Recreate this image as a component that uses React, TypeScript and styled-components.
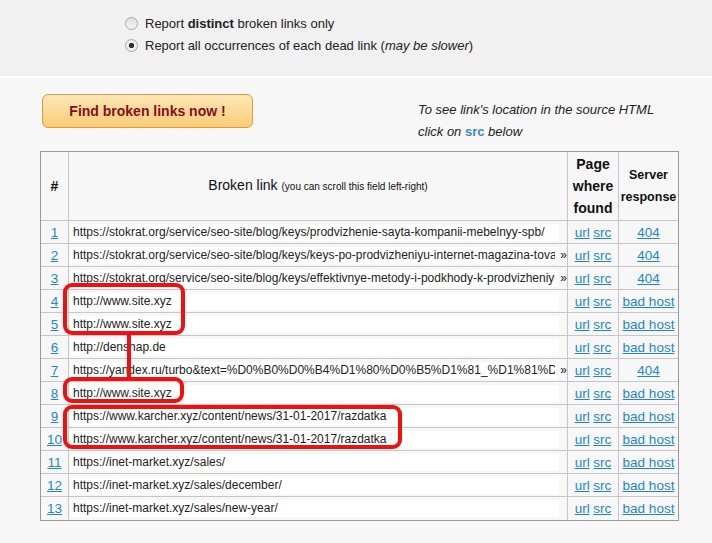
import React from "react";
import styled, { createGlobalStyle } from "styled-components";

const Global = createGlobalStyle`
  *, *::before, *::after { box-sizing: border-box; }
  html, body { margin: 0; padding: 0; background: #f7f7f7; }
  body { font-family: "Liberation Sans", Arial, sans-serif; color: #222; width: 712px; height: 543px; overflow: hidden; }
`;

const Page = styled.div`
  width: 712px;
  min-height: 543px;
  background: #f7f7f7;
`;

const TopPanel = styled.div`
  height: 78px;
  background: #f0f1f0;
  border-bottom: 2px solid #ffffff;
  padding: 12px 0 0 125px;
`;

const OptionRow = styled.label`
  display: flex;
  align-items: center;
  height: 22.5px;
  gap: 7px;
  font-size: 13px;
  color: #222;
`;

const Radio = styled.span<{ $checked?: boolean }>`
  width: 13px;
  height: 13px;
  border-radius: 50%;
  border: 1px solid #a9a9a9;
  background: ${(p) =>
    p.$checked
      ? "radial-gradient(circle, #333 0 2.5px, #f4f4f4 3px, #e2e2e2 100%)"
      : "linear-gradient(#dedede, #f6f6f6)"};
  flex: none;
`;

const Main = styled.div`
  padding: 16px 0 0 40px;
`;

const ActionRow = styled.div`
  display: flex;
  align-items: flex-start;
`;

const FindButton = styled.button`
  margin-left: 2px;
  width: 211px;
  height: 34px;
  border: 1px solid #e39a36;
  border-radius: 6px;
  background: linear-gradient(#fde7b6, #fbcd77);
  color: #8a0b22;
  font-family: "Liberation Sans", Arial, sans-serif;
  font-weight: bold;
  font-size: 14px;
  cursor: pointer;
`;

const Note = styled.div`
  margin: 5px 0 0 165px;
  font-style: italic;
  font-size: 13px;
  line-height: 22px;
  color: #222;
`;

const NoteLink = styled.b`
  font-style: normal;
  color: #4284bf;
`;

const TableWrap = styled.div`
  position: relative;
  margin-top: 8px;
  width: 639px;
`;

const Table = styled.table`
  table-layout: fixed;
  width: 639px;
  border-collapse: separate;
  border-spacing: 0;
  border: 1px solid #9a9a9a;
  background: #f7f7f7;
`;

const Th = styled.th<{ $size?: number; $bold?: boolean }>`
  height: 69px;
  padding: 0;
  border-right: 1px solid #c6c6c6;
  border-bottom: 1px solid #c6c6c6;
  font-size: ${(p) => p.$size ?? 13}px;
  font-weight: ${(p) => (p.$bold === false ? "normal" : "bold")};
  line-height: 22px;
  text-align: center;
  vertical-align: middle;
  color: #111;
  &:last-child { border-right: none; }
`;

const Small = styled.span`
  font-size: 10px;
  font-weight: normal;
`;

const Tr = styled.tr`
  &:last-child td { border-bottom: none; }
`;

const Td = styled.td<{ $align?: string }>`
  height: 23px;
  padding: 0;
  border-right: 1px solid #c6c6c6;
  border-bottom: 1px solid #c6c6c6;
  text-align: ${(p) => p.$align ?? "center"};
  vertical-align: middle;
  font-size: 13px;
  white-space: nowrap;
  &:last-child { border-right: none; }
`;

const A = styled.a`
  color: #1f86c8;
  text-decoration: underline;
  font-size: 13.5px;
`;

const LinkCell = styled.div`
  display: flex;
  align-items: center;
  padding-left: 1px;
`;

const Field = styled.div`
  width: 489px;
  height: 17px;
  background: #ffffff;
  padding: 0 3px 0 3px;
  font-size: 12px;
  line-height: 17px;
  overflow: hidden;
  white-space: nowrap;
  color: #222;
`;

const FieldText = styled.span`
  display: block;
  overflow: hidden;
  width: 100%;
`;

const More = styled.span`
  margin-left: 2px;
  font-size: 12px;
  color: #222;
`;

const Overlay = styled.svg`
  position: absolute;
  left: 0;
  top: 0;
  pointer-events: none;
`;

type Row = { url: string; more?: boolean; status: string };

const rows: Row[] = [
  { url: "https://stokrat.org/service/seo-site/blog/keys/prodvizhenie-sayta-kompanii-mebelnyy-spb/", status: "404" },
  { url: "https://stokrat.org/service/seo-site/blog/keys/keys-po-prodvizheniyu-internet-magazina-tovarov/", more: true, status: "404" },
  { url: "https://stokrat.org/service/seo-site/blog/keys/effektivnye-metody-i-podkhody-k-prodvizheniyu-saytov/", more: true, status: "404" },
  { url: "http://www.site.xyz", status: "bad host" },
  { url: "http://www.site.xyz", status: "bad host" },
  { url: "http://densnap.de", status: "bad host" },
  { url: "https://yandex.ru/turbo&text=%D0%B0%D0%B4%D1%80%D0%B5%D1%81_%D1%81%D0%B0%D0%B9%D1%82%D0%B0", more: true, status: "404" },
  { url: "http://www.site.xyz", status: "bad host" },
  { url: "https://www.karcher.xyz/content/news/31-01-2017/razdatka", status: "bad host" },
  { url: "https://www.karcher.xyz/content/news/31-01-2017/razdatka", status: "bad host" },
  { url: "https://inet-market.xyz/sales/", status: "bad host" },
  { url: "https://inet-market.xyz/sales/december/", status: "bad host" },
  { url: "https://inet-market.xyz/sales/new-year/", status: "bad host" },
];

export default function App() {
  return (
    <Page>
      <Global />
      <TopPanel>
        <OptionRow>
          <Radio />
          <span>
            Report <b>distinct</b> broken links only
          </span>
        </OptionRow>
        <OptionRow>
          <Radio $checked />
          <span>
            Report all occurrences of each dead link (<i>may be slower</i>)
          </span>
        </OptionRow>
      </TopPanel>
      <Main>
        <ActionRow>
          <FindButton>Find broken links now !</FindButton>
          <Note>
            To see link's location in the source HTML
            <br />
            click on <NoteLink>src</NoteLink> below
          </Note>
        </ActionRow>
        <TableWrap>
          <Table>
            <colgroup>
              <col style={{ width: 28 }} />
              <col style={{ width: 499 }} />
              <col style={{ width: 51 }} />
              <col style={{ width: 59 }} />
            </colgroup>
            <thead>
              <tr>
                <Th $size={14}>#</Th>
                <Th $size={14} $bold={false}>
                  Broken link <Small>(you can scroll this field left-right)</Small>
                </Th>
                <Th $size={14}>
                  Page
                  <br />
                  where
                  <br />
                  found
                </Th>
                <Th $size={12.5}>
                  Server
                  <br />
                  response
                </Th>
              </tr>
            </thead>
            <tbody>
              {rows.map((r, i) => (
                <Tr key={i}>
                  <Td>
                    <A href="#">{i + 1}</A>
                  </Td>
                  <Td $align="left">
                    <LinkCell>
                      <Field>
                        <FieldText>{r.url}</FieldText>
                      </Field>
                      {r.more && <More>»</More>}
                    </LinkCell>
                  </Td>
                  <Td>
                    <A href="#">url</A> <A href="#">src</A>
                  </Td>
                  <Td>
                    <A href="#">{r.status}</A>
                  </Td>
                </Tr>
              ))}
            </tbody>
          </Table>
          <Overlay width="639" height="380" viewBox="0 0 639 380">
            <g fill="none" stroke="#f01010" strokeWidth="4">
              <rect x="25" y="134" width="118" height="48" rx="7" />
              <line x1="89" y1="182" x2="89" y2="228" />
              <rect x="25" y="228" width="117" height="22" rx="7" />
              <rect x="25" y="256" width="335" height="40" rx="7" />
            </g>
          </Overlay>
        </TableWrap>
      </Main>
    </Page>
  );
}
